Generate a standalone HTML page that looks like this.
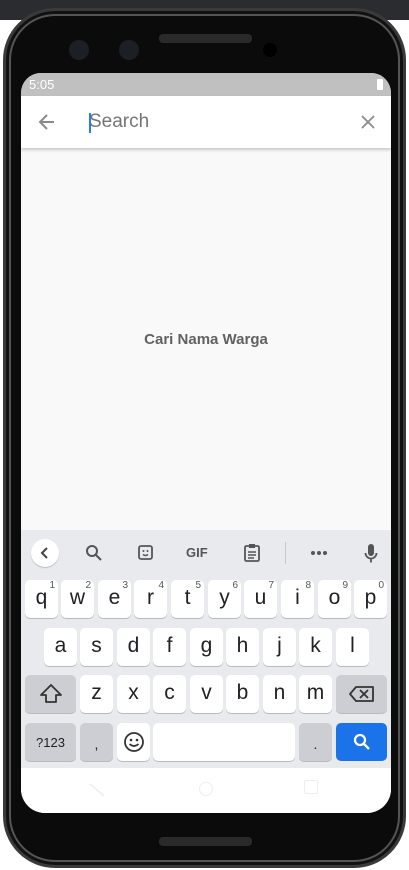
<!DOCTYPE html>
<html><head><meta charset="utf-8"><style>
*{margin:0;padding:0;box-sizing:border-box}
body{width:409px;height:870px;overflow:hidden;background:#fff;position:relative;font-family:"Liberation Sans",sans-serif}
.strip{position:absolute;left:0;top:0;width:409px;height:20px;background:#2b2c2f}
.phone{position:absolute;left:3px;top:8px;width:403px;height:860px;background:#0b0b0b;border-radius:52px;border:3px solid #3a3a3a;box-shadow:inset 0 0 0 3px #111,inset 0 0 0 5px #555}
.screen{position:absolute;left:21px;top:73px;width:370px;height:740px;border-radius:20px 20px 24px 24px;overflow:hidden;background:#f9f9f9}
.status{position:absolute;left:0;top:0;width:370px;height:23px;background:#c0c0c0;color:#fff;font-size:13px;padding:4px 0 0 8px}
.bat{position:absolute;right:8px;top:6px;width:6px;height:11px;background:#fff;border-radius:1px}
.appbar{position:absolute;left:0;top:23px;width:370px;height:52px;background:#fff;box-shadow:0 2px 3px rgba(0,0,0,.2)}
.hint{position:absolute;left:68px;top:15px;font-size:19px;color:#757575}
.caret{position:absolute;left:68px;top:17px;width:2px;height:20px;background:#2a7de1}
.center{position:absolute;left:0;width:370px;top:258px;text-align:center;font-weight:bold;font-size:15px;color:#616161}
.kb{position:absolute;left:0;top:457px;width:370px;height:238px;background:#e8eaed}
.nav{position:absolute;left:0;top:695px;width:370px;height:45px;background:#fff}
.k{position:absolute;width:33px;height:38px;background:#fff;border-radius:5px;box-shadow:0 1px 0 #b8babd;font-size:21px;text-align:center;line-height:36px;color:#202124}
.k sup{position:absolute;right:3px;top:-12px;font-size:10px;color:#555}
.g{background:#ccced3}
</style></head><body>
<div class="strip"></div>
<div class="phone"></div>
<div style="position:absolute;left:159px;top:34px;width:93px;height:9px;background:#2a2a2a;border-radius:4px"></div>
<div style="position:absolute;left:69px;top:40px;width:20px;height:20px;background:#1c2026;border-radius:50%"></div>
<div style="position:absolute;left:119px;top:40px;width:20px;height:20px;background:#1c2026;border-radius:50%"></div>
<div style="position:absolute;left:263px;top:43px;width:14px;height:14px;background:#000;border-radius:50%"></div>
<div style="position:absolute;left:159px;top:837px;width:93px;height:9px;background:#2a2a2a;border-radius:4px"></div>
<div class="screen">
 <div class="status">5:05<div class="bat"></div></div>
 <div class="appbar">
  <svg style="position:absolute;left:16px;top:16px" width="20" height="20" viewBox="0 0 20 20"><path d="M17 10H4M10 3L3 10l7 7" stroke="#8a8a8a" stroke-width="2" fill="none"/></svg>
  <div class="hint">Search</div><div class="caret"></div>
  <svg style="position:absolute;left:339px;top:18px" width="16" height="16" viewBox="0 0 16 16"><path d="M2 2L14 14M14 2L2 14" stroke="#8a8a8a" stroke-width="1.8"/></svg>
 </div>
 <div class="center">Cari Nama Warga</div>
 <div class="kb">
  <div style="position:absolute;left:10px;top:9px;width:28px;height:28px;border-radius:50%;background:#fff;box-shadow:0 1px 1px #bbb"></div>
  <svg style="position:absolute;left:18px;top:16px" width="12" height="14"><path d="M8 2L3 7l5 5" stroke="#444" stroke-width="2" fill="none"/></svg>
  <svg style="position:absolute;left:64px;top:14px" width="18" height="18"><circle cx="7" cy="7" r="5" stroke="#555" stroke-width="2" fill="none"/><path d="M11 11l5 5" stroke="#555" stroke-width="2"/></svg>
  <svg style="position:absolute;left:116px;top:14px" width="18" height="18"><rect x="2" y="2" width="13" height="13" rx="2" stroke="#555" stroke-width="1.8" fill="none"/><circle cx="6.5" cy="7" r="1" fill="#555"/><circle cx="10.5" cy="7" r="1" fill="#555"/><path d="M6 10.5q2.5 2 5 0" stroke="#555" stroke-width="1.5" fill="none"/></svg>
  <div style="position:absolute;left:165px;top:15px;font-size:13px;font-weight:bold;color:#555">GIF</div>
  <svg style="position:absolute;left:222px;top:13px" width="18" height="20"><rect x="2" y="3" width="14" height="15" rx="1.5" stroke="#555" stroke-width="1.8" fill="none"/><rect x="6" y="1" width="6" height="4" fill="#555"/><path d="M5 9h8M5 12h8M5 15h6" stroke="#555" stroke-width="1.4"/></svg>
  <div style="position:absolute;left:264px;top:12px;width:1px;height:22px;background:#c8c8c8"></div>
  <svg style="position:absolute;left:289px;top:20px" width="18" height="6"><circle cx="3" cy="3" r="2" fill="#555"/><circle cx="9" cy="3" r="2" fill="#555"/><circle cx="15" cy="3" r="2" fill="#555"/></svg>
  <svg style="position:absolute;left:343px;top:13px" width="14" height="22"><rect x="4" y="1" width="6" height="12" rx="3" fill="#555"/><path d="M1.5 10a5.5 5.5 0 0 0 11 0M7 15.5v4" stroke="#555" stroke-width="1.8" fill="none"/></svg>

  <div class="k" style="left:4px;top:50px">q<sup>1</sup></div>
  <div class="k" style="left:40px;top:50px">w<sup>2</sup></div>
  <div class="k" style="left:77px;top:50px">e<sup>3</sup></div>
  <div class="k" style="left:113px;top:50px">r<sup>4</sup></div>
  <div class="k" style="left:150px;top:50px">t<sup>5</sup></div>
  <div class="k" style="left:187px;top:50px">y<sup>6</sup></div>
  <div class="k" style="left:223px;top:50px">u<sup>7</sup></div>
  <div class="k" style="left:260px;top:50px">i<sup>8</sup></div>
  <div class="k" style="left:297px;top:50px">o<sup>9</sup></div>
  <div class="k" style="left:333px;top:50px">p<sup>0</sup></div>

  <div class="k" style="left:23px;top:98px">a</div>
  <div class="k" style="left:59px;top:98px">s</div>
  <div class="k" style="left:96px;top:98px">d</div>
  <div class="k" style="left:132px;top:98px">f</div>
  <div class="k" style="left:169px;top:98px">g</div>
  <div class="k" style="left:205px;top:98px">h</div>
  <div class="k" style="left:242px;top:98px">j</div>
  <div class="k" style="left:278px;top:98px">k</div>
  <div class="k" style="left:315px;top:98px">l</div>

  <div class="k g" style="left:4px;top:145px;width:51px"><svg width="24" height="22" style="margin-top:8px"><path d="M12 2L2 12h5v7h10v-7h5z" stroke="#333" stroke-width="1.8" fill="none" stroke-linejoin="round"/></svg></div>
  <div class="k" style="left:59px;top:145px">z</div>
  <div class="k" style="left:96px;top:145px">x</div>
  <div class="k" style="left:132px;top:145px">c</div>
  <div class="k" style="left:169px;top:145px">v</div>
  <div class="k" style="left:205px;top:145px">b</div>
  <div class="k" style="left:242px;top:145px">n</div>
  <div class="k" style="left:278px;top:145px">m</div>
  <div class="k g" style="left:315px;top:145px;width:51px"><svg width="26" height="18" style="margin-top:10px"><path d="M7 2h17v14H7L1 9z" stroke="#333" stroke-width="1.8" fill="none" stroke-linejoin="round"/><path d="M11 5l8 8M19 5l-8 8" stroke="#333" stroke-width="1.8"/></svg></div>

  <div class="k g" style="left:4px;top:193px;width:51px;font-size:13px;line-height:39px">?123</div>
  <div class="k g" style="left:59px;top:193px;font-size:14px;line-height:42px">,</div>
  <div class="k" style="left:96px;top:193px"><svg width="22" height="22" style="margin-top:8px"><circle cx="11" cy="11" r="9" stroke="#333" stroke-width="1.8" fill="none"/><circle cx="8" cy="9" r="1.3" fill="#333"/><circle cx="14" cy="9" r="1.3" fill="#333"/><path d="M6.5 13q4.5 4 9 0" stroke="#333" stroke-width="1.6" fill="none"/></svg></div>
  <div class="k" style="left:132px;top:193px;width:142px"></div>
  <div class="k g" style="left:278px;top:193px;font-size:14px;line-height:42px">.</div>
  <div class="k" style="left:315px;top:193px;width:51px;background:#1a73e8;box-shadow:none"><svg width="18" height="18" style="margin-top:10px"><circle cx="7" cy="7" r="5" stroke="#fff" stroke-width="2.2" fill="none"/><path d="M11 11l5 5" stroke="#fff" stroke-width="2.4"/></svg></div>
 </div>
 <div class="nav">
  <svg style="position:absolute;left:68px;top:15px" width="16" height="14"><path d="M1 1l14 12" stroke="#eee" stroke-width="1.5"/></svg>
  <div style="position:absolute;left:178px;top:14px;width:14px;height:14px;border:1px solid #eee;border-radius:50%"></div>
  <div style="position:absolute;left:283px;top:12px;width:14px;height:14px;border:1px solid #eee;border-radius:2px"></div>
 </div>
</div>
</body></html>
